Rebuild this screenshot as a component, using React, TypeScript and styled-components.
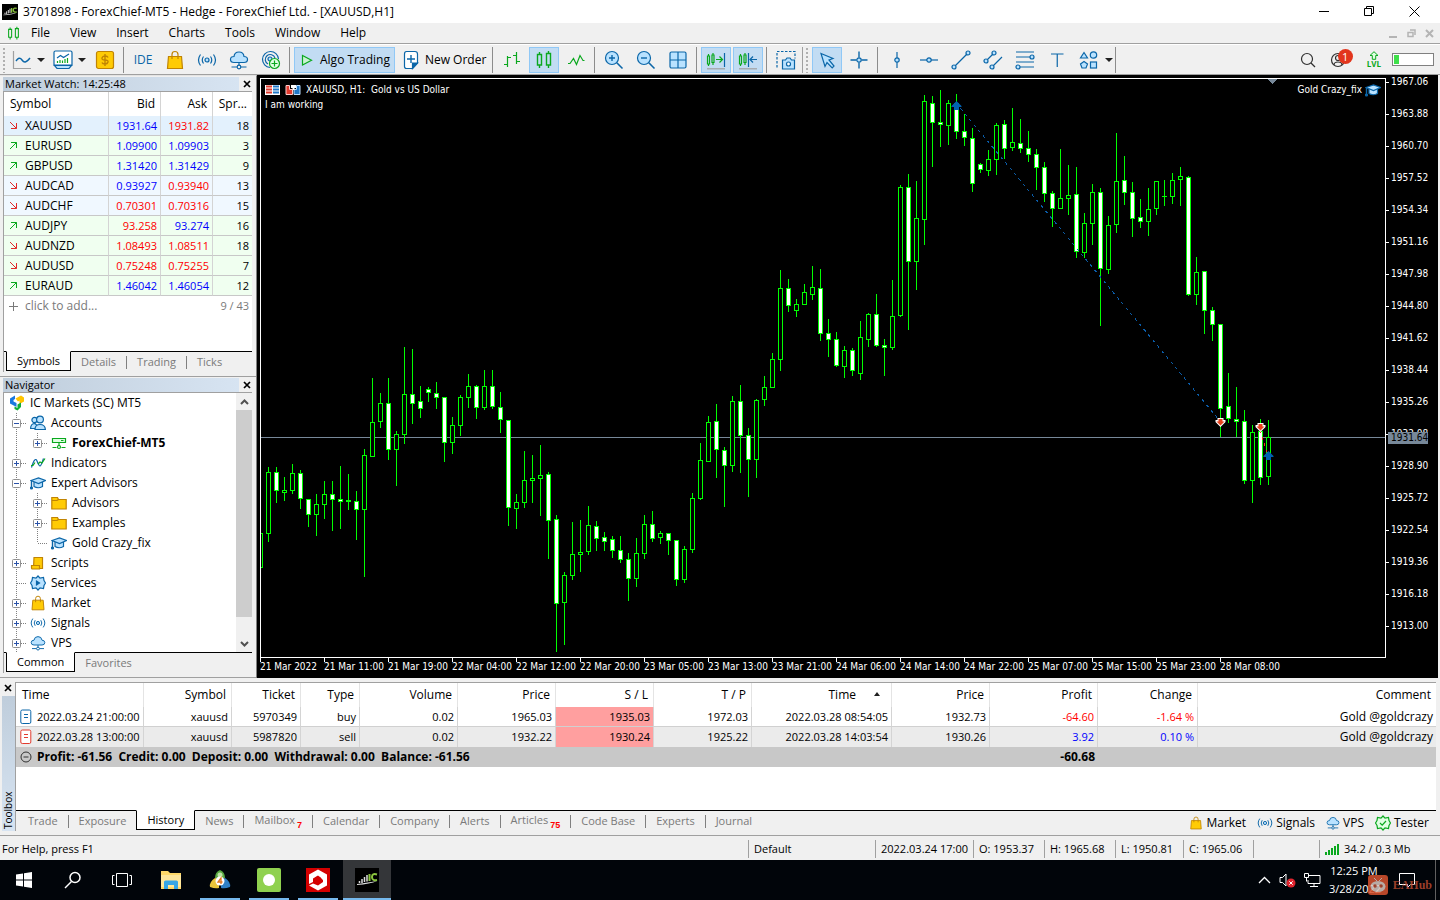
import { Fragment, ReactNode } from 'react';
import styled, { createGlobalStyle, css } from 'styled-components';

const UI_FONT = `'Open Sans', 'Noto Sans', sans-serif`;
const CHART_FONT = `'DejaVu Sans Condensed', 'DejaVu Sans', sans-serif`;

const BLUE = '#0b66a8';
const SKY = '#b9e2ff';
const GREEN = '#0aa81e';
const GOLD = '#ffcb05';
const GOLD_DARK = '#c08404';

const GlobalStyle = createGlobalStyle`
  * { box-sizing: border-box; }
  body {
    margin: 0;
    background: #f0f0f0;
    color: #000;
    font-family: ${UI_FONT};
    font-size: 12px;
    line-height: 16px;
  }
  button {
    margin: 0;
    padding: 0;
    border: 0;
    background: none;
    color: inherit;
    font: inherit;
  }
  a { color: inherit; text-decoration: none; }
  svg { display: block; flex: none; }
`;

/* ---------- icons ---------- */

type IconProps = { size?: number; box?: string; children: ReactNode };

const Svg = ({ size = 20, box = '0 0 20 20', children }: IconProps) => (
  <svg width={size} height={size} viewBox={box} fill="none" stroke={BLUE} strokeWidth="1.2">
    {children}
  </svg>
);

const LineChartIcon = () => (
  <Svg>
    <path d="M1.5 1v17.5H19" stroke="#a0a0a0" />
    <path d="M4 11c2-3 4-4 6-1s4 3 8-2" strokeWidth="1.4" />
  </Svg>
);

const TemplateIcon = () => (
  <Svg>
    <path d="M1 12V2.5Q1 1 2.500 1h15Q19 1 19 2.500V15H1z" fill="#fff" />
    <path d="M1.500 15.500h17L16 18.500H4z" fill={SKY} />
    <path d="M4 8l3.500-2.500 3 2L16 4" />
    <path d="M4.500 13v-2M7 13v-3M9.500 13v-2.500M12 13v-4M14.500 13V8" stroke={GREEN} />
  </Svg>
);

const DollarIcon = () => (
  <Svg>
    <rect x="1.500" y="1.500" width="17" height="17" rx="2" fill={GOLD} stroke={GOLD_DARK} />
    <path
      d="M13 7.500Q12.500 6 10 6T7 8t3 2 3 2-3 2-3-1.500M10 4v12"
      stroke={GOLD_DARK}
      strokeWidth="1.400"
    />
  </Svg>
);

const BagIcon = ({ size = 20 }: { size?: number }) => (
  <Svg size={size}>
    <path d="M3.500 6.500h13l1 12h-15z" fill={GOLD} stroke={GOLD_DARK} />
    <path d="M7 9V4.500Q7 1.500 10 1.500t3 3V9" stroke={GOLD_DARK} />
  </Svg>
);

const SignalIcon = ({ size = 20 }: { size?: number }) => (
  <Svg size={size}>
    <circle cx="10" cy="10" r="2" fill={SKY} />
    <path d="M6.500 6.500q-2.500 3.500 0 7M13.500 6.500q2.500 3.500 0 7M3.500 4.500q-4 5.500 0 11M16.500 4.500q4 5.500 0 11" />
  </Svg>
);

const CloudIcon = ({ size = 20 }: { size?: number }) => (
  <Svg size={size}>
    <path
      d="M5 12.500q-3.500 0-3.500-3T5 6.500q.5-4.500 5-4.500t5 4.500q3.500 0 3.500 3t-3.500 3z"
      fill={SKY}
    />
    <path d="M10 12.500v3M2.500 17H8M12 17h5.500" />
    <circle cx="10" cy="17" r="1.800" />
  </Svg>
);

const RadarIcon = () => (
  <Svg>
    <path d="M9 17.500a8 8 0 1 1 8.500-8.500M7 14a5 5 0 1 1 7-6" />
    <circle cx="9" cy="9" r="2" fill={SKY} />
    <circle cx="13.500" cy="13.500" r="5" fill="#dfffe2" stroke={GREEN} />
    <path d="M13.500 10.500v6M10.500 13.500h6" stroke={GREEN} />
  </Svg>
);

const PlayIcon = () => (
  <Svg>
    <path d="M5.500 5.500v9.500l9-4.750z" stroke={GREEN} fill="#c9f3d2" />
  </Svg>
);

const NewOrderIcon = () => (
  <Svg>
    <path
      d="M4.500 1.500h8.500q2.500 0 2.500 2.500v9l-5 5.500h-6Q2.500 18.500 2.500 16.500V4q0-2.500 2-2.500z"
      fill="#fff"
    />
    <path d="M15.500 13l-5 5.500V13z" fill={BLUE} />
    <path d="M9 5v8M5 9h8" strokeWidth="1.400" />
  </Svg>
);

const BarsIcon = () => (
  <Svg>
    <path d="M5.500 6v11M2 14.500h3.500M5.500 7.500H9M14.500 2v12M11 5.500h3.500M14.500 11.500H18" stroke={GREEN} />
  </Svg>
);

const CandlesIcon = ({ size = 20 }: { size?: number }) => (
  <Svg size={size}>
    <path
      d="M5.500 2v2.500M5.500 15v3M14.500 1v2.500M14.500 15v3M3.500 4.500h4V15h-4zM12.500 3.500h4V15h-4z"
      stroke={GREEN}
      strokeWidth="1.400"
    />
  </Svg>
);

const ZigzagIcon = () => (
  <Svg>
    <path d="M2 13.500h2l3.500-5 3 6 3.500-9 3 5h1.500" stroke={GREEN} />
  </Svg>
);

const ZoomIcon = ({ plus }: { plus?: boolean }) => (
  <Svg>
    <circle cx="8" cy="8" r="6.500" fill={SKY} />
    <path d="M12.800 12.800L18.500 18.500" strokeWidth="1.600" />
    <path d={plus ? 'M8 5v6M5 8h6' : 'M5 8h6'} strokeWidth="1.400" />
  </Svg>
);

const TileIcon = () => (
  <Svg>
    <rect x="2" y="2" width="16" height="16" rx="1.500" fill={SKY} />
    <path d="M10 2v16M2 10h16" />
  </Svg>
);

const ScrollIcon = ({ shift }: { shift?: boolean }) => (
  <Svg>
    <path d="M2.500 4v2M2.500 14v2M7 3v2M7 12v3M1.500 6h2v8h-2zM6 5h2v7.500H6z" stroke={GREEN} />
    {shift ? (
      <path d="M10.500 3v14M19 9.500h-6.500M15 6.500l-3 3 3 3" />
    ) : (
      <>
        <path d="M10 9.500h6M13.500 6.500l3 3-3 3" stroke={GREEN} />
        <path d="M18.500 3v14" />
      </>
    )}
    <path d="M1 18.800h18" stroke="#a0a0a0" />
  </Svg>
);

const CameraIcon = () => (
  <Svg>
    <path d="M1 17.500V1.500h18v7" strokeDasharray="2.500 1.500" />
    <path d="M6.500 10h3l1.500-2h3l1.500 2h3v9h-12z" fill={SKY} />
    <circle cx="12.500" cy="14" r="2" fill="#fff" />
  </Svg>
);

const CursorIcon = () => (
  <Svg>
    <path d="M4 3.500l12 5-4 1.500 5 6-1.800 1.800L10 12.500l-2 4z" fill={SKY} />
  </Svg>
);

const CrosshairIcon = () => (
  <Svg>
    <path d="M10 1.500v6M10 12.500v6M1.500 10h6M12.500 10h6" strokeWidth="1.400" />
    <circle cx="10" cy="10" r="2.200" fill={SKY} />
  </Svg>
);

const VLineIcon = () => (
  <Svg>
    <path d="M10 2v16" />
    <circle cx="10" cy="10" r="2.200" fill={SKY} />
  </Svg>
);

const HLineIcon = () => (
  <Svg>
    <path d="M1 10h18" />
    <circle cx="10" cy="10" r="2.200" fill={SKY} />
  </Svg>
);

const TrendIcon = () => (
  <Svg>
    <path d="M3 17L17 3" />
    <circle cx="3" cy="17" r="2" fill={SKY} />
    <circle cx="17" cy="3" r="2" fill={SKY} />
  </Svg>
);

const ChannelIcon = () => (
  <Svg>
    <path d="M3 11L11 3M9 17L19 7" />
    <circle cx="3" cy="11" r="2" fill={SKY} />
    <circle cx="11" cy="3" r="2" fill={SKY} />
    <circle cx="9" cy="17" r="2" fill={SKY} />
  </Svg>
);

const LevelsIcon = () => (
  <Svg>
    <path d="M1 2h18M1 7h14M1 12h18M5 17h14" />
    <circle cx="17" cy="7" r="2" fill={SKY} />
    <circle cx="3" cy="17" r="2" fill={SKY} />
  </Svg>
);

const TextIcon = () => (
  <Svg>
    <path d="M4 4h12.500M10.250 4v13" />
  </Svg>
);

const ShapesIcon = () => (
  <Svg>
    <path d="M5 2.500l3.500 5.500H1.500z" fill={SKY} />
    <circle cx="14.500" cy="5" r="3.200" fill={SKY} />
    <path d="M5 11.500l3.500 2.500-1.500 4H3L1.500 14z" fill={SKY} />
    <rect x="11.500" y="12" width="6" height="6" fill={SKY} />
  </Svg>
);

const SearchIcon = () => (
  <Svg>
    <circle cx="9" cy="9" r="5.500" stroke="#303030" />
    <path d="M13 13l4 4" stroke="#303030" />
  </Svg>
);

const AccountIcon = () => (
  <Svg>
    <circle cx="9" cy="10" r="6.500" stroke="#303030" />
    <circle cx="9" cy="8" r="2.500" stroke="#303030" />
    <path d="M5 15q0-3 4-3t4 3" stroke="#303030" />
  </Svg>
);

const LevelUpIcon = () => (
  <svg width="14" height="9" viewBox="0 0 14 9" fill="#dfffe2" stroke={GREEN}>
    <path d="M7 .7l4 3.800H8.700v3.800H5.300V4.500H3z" />
  </svg>
);

const CapIcon = () => (
  <Svg size={16} box="0 0 16 16">
    <path d="M4 7v4.500q4 2.500 8.500 0V7" fill={SKY} />
    <path d="M1 5.500L8.500 3l7 2.500-7 3z" fill={SKY} />
    <path d="M1.500 6v7" strokeWidth="1.400" />
    <circle cx="1.500" cy="13" r="1" fill={BLUE} />
  </Svg>
);

const AccountsIcon = () => (
  <Svg size={16} box="0 0 16 16">
    <path d="M.6 13.500q0-5 4.500-5l3 3v2z" fill={SKY} />
    <circle cx="4.500" cy="5" r="2.600" fill={SKY} />
    <path d="M5 14.500q0-5 5-5t5.400 5z" fill={SKY} />
    <circle cx="10" cy="4.500" r="3.400" fill={SKY} />
  </Svg>
);

const ServerIcon = () => (
  <Svg size={16} box="0 0 16 16">
    <path d="M1.500 3.500h13v4h-13z" stroke={GREEN} fill="#dfffe2" />
    <path d="M8 7.500V11M1.500 12.500h4M10.500 12.500h4M10 5.500h2.500" stroke={GREEN} />
    <circle cx="8" cy="12" r="1.500" stroke={GREEN} />
  </Svg>
);

const IndicatorsIcon = () => (
  <Svg size={16} box="0 0 16 16">
    <path d="M1.500 12.500Q5 1 7 6t3 5 3.500-7.500" />
    <path d="M1 10.500h2l2-3M8 9l2-2 2 1 3-4.500" stroke={GREEN} />
  </Svg>
);

const FolderIcon = () => (
  <Svg size={16} box="0 0 16 16">
    <path d="M.8 2.500h5.700l1 2h7.700v9.500H.8z" fill={GOLD} stroke={GOLD_DARK} />
    <path d="M1 5.500h5l1.500-1" stroke={GOLD_DARK} />
  </Svg>
);

const ScriptIcon = () => (
  <Svg size={16} box="0 0 16 16">
    <path d="M4 2.500h8.500v11H3.500z" fill={GOLD} stroke={GOLD_DARK} />
    <path d="M1.500 10.500h8v3.500h-7q-1 0-1-1.500z" fill={GOLD} stroke={GOLD_DARK} />
  </Svg>
);

const GEAR = 'M8 1l2 2.200 3.500-.7.500 3L15.500 8 14 10.500l-.5 3L10 12.800 8 15l-2-2.200-3.500.7-.5-3L.5 8 2 5.500l.5-3 3.500.7z';

const ServicesIcon = () => (
  <Svg size={16} box="0 0 16 16">
    <path d={GEAR} fill={SKY} />
    <path d="M6.500 6v4L9.500 8z" fill={BLUE} />
  </Svg>
);

const TesterIcon = () => (
  <Svg size={16} box="0 0 16 16">
    <path d={GEAR} fill="#dfffe2" stroke={GREEN} />
    <path d="M5 8l2.200 2.200L11 6" stroke={GREEN} />
  </Svg>
);

const BrokerIcon = () => (
  <svg width="16" height="16" viewBox="0 0 16 16">
    <path d="M1 3.500L6 .5v3.500L4.500 5v1.500L7.500 8v4L1 8.500z" fill="#1877e0" />
    <path d="M6.500 3.500L12 .5l3 2v4L10.500 9V5.500L9 6.500z" fill="#ffc400" />
    <path d="M5.500 11.500l3 1.500V9.500L12 7.500V12l-3.500 3.500-3-1.500z" fill="#0fae3a" />
  </svg>
);

const ArrowIcon = ({ up }: { up?: boolean }) => (
  <svg width="9" height="9" viewBox="0 0 9 9" fill="none" stroke={up ? GREEN : '#e02b2b'}>
    <path d={up ? 'M1 8l6.500-6.500M2 1.500h5.500V7' : 'M1 1l6.500 6.500M2 7.500h5.500V2'} />
  </svg>
);

const DocIcon = ({ color }: { color: string }) => (
  <svg width="12" height="16" viewBox="0 0 12 16" fill="#fff" stroke={color}>
    <rect x=".8" y="1" width="10" height="13.500" rx="1.500" />
    <path d="M4 5.500h4M4 8.500h4" />
  </svg>
);

const CloseGlyph = () => (
  <svg width="8" height="8" viewBox="0 0 8 8" stroke="#000" strokeWidth="1.700">
    <path d="M1 1l6 6M7 1L1 7" />
  </svg>
);

const LogoIcon = ({ size = 16 }: { size?: number }) => (
  <svg width={size} height={size} viewBox="0 0 24 24">
    <rect width="24" height="24" fill="#000" />
    <path d="M2 16q8-1 20-3-7 3-20 4z" fill="#ddd" />
    <path d="M4.500 15v-2M7 15v-4M9.500 14V9M12 13.500V7" stroke="#ddd" strokeWidth="1.500" />
    <path d="M14.500 6v7M22 6.500q-5-1.500-5 2.500t5 3" fill="none" stroke="#8cc63f" strokeWidth="2" />
  </svg>
);

/* ---------- shell ---------- */

const Page = styled.div`
  display: flex;
  flex-direction: column;
  min-height: 100vh;
`;

const TitleBar = styled.header`
  display: flex;
  align-items: center;
  height: 23px;
  padding: 0 3px 0 2px;
  background: #fff;
  white-space: pre;
`;

const Title = styled.h1`
  flex: 1;
  margin: 0 0 0 5px;
  font-size: 12px;
  font-weight: 400;
`;

const WindowButton = styled.button`
  display: grid;
  place-items: center;
  width: 45px;
  height: 22px;
`;

const MenuBar = styled.nav`
  display: flex;
  align-items: center;
  height: 21px;
  padding-left: 6px;
  border-bottom: 1px solid #a0a0a0;
`;

const MenuItem = styled.button`
  margin-left: 10px;
  padding-right: 10px;
`;

const MdiButtons = styled.div`
  display: flex;
  gap: 9px;
  margin-left: auto;
  padding-right: 6px;
`;

const ToolBar = styled.div`
  display: flex;
  align-items: center;
  height: 31px;
  border-top: 1px solid #fff;
  border-bottom: 1px solid #a0a0a0;
`;

const Grip = styled.span<{ $edge?: boolean }>`
  width: 7px;
  height: 26px;
  background: radial-gradient(#b0b0b0 1px, transparent 1px) 2px 0 / 4px 4px repeat-y;
  ${({ $edge }) =>
    $edge &&
    css`
      width: 9px;
      border-left: 1px solid #a0a0a0;
    `}
`;

const Separator = styled.span`
  width: 6px;
  height: 26px;
  background: linear-gradient(#8c8c8c, #8c8c8c) 2px 0 / 1px 26px no-repeat;
`;

const ToolButton = styled.button<{ $active?: boolean }>`
  display: grid;
  place-items: center;
  width: 30px;
  height: 26px;
  margin: 0 1px;
  color: ${BLUE};
  ${({ $active }) =>
    $active &&
    css`
      border: 1px solid #90c8f6;
      background: #c2dcf3;
    `}
`;

const DropButton = styled.button`
  display: flex;
  align-items: center;
  gap: 5px;
  width: 41px;
  height: 26px;
  padding-left: 5px;
`;

const Caret = styled.span`
  border: 4px solid transparent;
  border-top-color: #202020;
  border-bottom: 0;
`;

const CaretButton = styled.button`
  display: grid;
  place-items: center;
  width: 8px;
`;

const WideButton = styled.button<{ $active?: boolean }>`
  display: flex;
  align-items: center;
  gap: 3px;
  height: 26px;
  padding: 0 4px 0 6px;
  white-space: nowrap;
  ${({ $active }) =>
    $active &&
    css`
      margin: 0 1px;
      padding: 0 4px 0 2px;
      border: 1px solid #90c8f6;
      background: #c2dcf3;
    `}
`;

const ToolBarEnd = styled.div`
  display: flex;
  align-items: center;
  gap: 11px;
  margin-left: auto;
  padding-right: 6px;
`;

const BadgeButton = styled.button`
  position: relative;
  padding-right: 3px;
`;

const Badge = styled.span`
  position: absolute;
  top: -1px;
  right: -1px;
  width: 15px;
  height: 15px;
  border-radius: 50%;
  background: #e2351d;
  color: #fff;
  font-size: 11px;
  line-height: 15px;
  text-align: center;
`;

const LevelButton = styled.button`
  display: flex;
  flex-direction: column;
  align-items: center;
  margin-left: 4px;
  color: ${GREEN};
  font-size: 8px;
  font-weight: 700;
  line-height: 8px;
`;

const Meter = styled.div`
  width: 42px;
  height: 13px;
  padding: 1px;
  border: 1px solid #808080;
  background: #fff;
`;

const MeterFill = styled.div`
  width: 5px;
  height: 9px;
  background: #3fe04a;
`;

const Workspace = styled.main`
  display: flex;
  flex: 1 0 603px;
  min-height: 0;
`;

const SideBar = styled.aside`
  display: grid;
  grid-template-rows: minmax(0, 1fr) minmax(0, 1fr);
  width: 257px;
  border-top: 1px solid #e3e3e3;
  border-right: 1px solid #808080;
`;

const Panel = styled.section`
  display: flex;
  flex-direction: column;
  min-height: 0;
  padding: 1px 4px 4px 3px;
  border-bottom: 1px solid #a0a0a0;
`;

const PanelHead = styled.div`
  display: flex;
  align-items: center;
  justify-content: space-between;
  height: 14px;
  padding-right: 1px;
`;

const PanelTitle = styled.h2`
  width: 236px;
  margin: 0;
  padding-left: 2px;
  background: linear-gradient(90deg, #bfcddb, #d7e4f2);
  font-size: 11px;
  font-weight: 400;
  line-height: 14px;
`;

const PanelBody = styled.div`
  display: flex;
  flex: 1;
  min-height: 0;
  overflow: hidden;
  border: 1px solid #a0a0a0;
  border-width: 1px 0 0 1px;
  background: #fff;
`;

const Tabs = styled.div`
  display: flex;
  flex: none;
  align-items: flex-start;
  height: 21px;
  border-left: 1px solid #a0a0a0;
`;

const Tab = styled.button<{ $active?: boolean; $divider?: boolean }>`
  height: 20px;
  padding: 0 10px;
  border-top: 1px solid #000;
  color: #7a7a7a;
  font-size: 11px;
  white-space: nowrap;
  ${({ $divider }) =>
    $divider &&
    css`
      padding-right: 11px;
      background: linear-gradient(#808080, #808080) right 4px / 1px 13px no-repeat;
    `}
  ${({ $active }) =>
    $active &&
    css`
      border: 1px solid #000;
      border-top-color: #fff;
      background: #fff;
      color: #000;
    `}
`;

const TabLine = styled.span<{ $fill?: boolean }>`
  flex: ${({ $fill }) => ($fill ? 1 : 'none')};
  width: 2px;
  border-top: 1px solid #000;
`;

const TabCount = styled.sub`
  margin-left: 2px;
  color: #f00;
  font-family: 'Liberation Sans', sans-serif;
  font-size: 9px;
  font-weight: 700;
  line-height: 8px;
  vertical-align: -4px;
`;

/* ---------- market watch ---------- */

const WatchTable = styled.table`
  width: 248px;
  height: max-content;
  border-collapse: separate;
  border-spacing: 0;
  table-layout: fixed;

  th, td {
    padding: 0 3px;
    border-right: 1px solid #d4d4d4;
    font-weight: 400;
    text-align: right;
    white-space: nowrap;
  }
  th { height: 24px; padding-right: 5px; }
  td { height: 20px; border-bottom: 1px solid #c8c8c8; font-size: 11px; }
  th:first-child { padding-left: 6px; text-align: left; }
  th:last-child, td:last-child { border-right: 0; }
`;

const WatchRow = styled.tr<{ $tint: string }>`
  background: ${({ $tint }) => $tint};
`;

const SymbolName = styled.span`
  display: flex;
  align-items: center;
  gap: 7px;
  padding-left: 2px;
  font-size: 12px;
`;

const Quote = styled.td<{ $up: boolean }>`
  color: ${({ $up }) => ($up ? '#0000ff' : '#ff0000')};
`;

const AddRow = styled.tr`
  color: #7a7a7a;
  && td { border: 0; }
`;

type Watch = {
  symbol: string;
  bid: string;
  ask: string;
  spread: number;
  up: boolean;
  bidUp: boolean;
  askUp: boolean;
  tint: string;
};

const MINT = '#f0fff0';
const ICE = '#f0f8ff';

const WATCH: Watch[] = [
  { symbol: 'XAUUSD', bid: '1931.64', ask: '1931.82', spread: 18, up: false, bidUp: true, askUp: false, tint: '#e3f1fd' },
  { symbol: 'EURUSD', bid: '1.09900', ask: '1.09903', spread: 3, up: true, bidUp: true, askUp: true, tint: MINT },
  { symbol: 'GBPUSD', bid: '1.31420', ask: '1.31429', spread: 9, up: true, bidUp: true, askUp: true, tint: MINT },
  { symbol: 'AUDCAD', bid: '0.93927', ask: '0.93940', spread: 13, up: false, bidUp: true, askUp: false, tint: ICE },
  { symbol: 'AUDCHF', bid: '0.70301', ask: '0.70316', spread: 15, up: false, bidUp: false, askUp: false, tint: ICE },
  { symbol: 'AUDJPY', bid: '93.258', ask: '93.274', spread: 16, up: true, bidUp: false, askUp: true, tint: MINT },
  { symbol: 'AUDNZD', bid: '1.08493', ask: '1.08511', spread: 18, up: false, bidUp: false, askUp: false, tint: MINT },
  { symbol: 'AUDUSD', bid: '0.75248', ask: '0.75255', spread: 7, up: false, bidUp: false, askUp: false, tint: MINT },
  { symbol: 'EURAUD', bid: '1.46042', ask: '1.46054', spread: 12, up: true, bidUp: true, askUp: true, tint: MINT },
];

const CloseButton = ({ label }: { label: string }) => (
  <button aria-label={label}>
    <CloseGlyph />
  </button>
);

const MarketWatch = () => (
  <Panel>
    <PanelHead>
      <PanelTitle>Market Watch: 14:25:48</PanelTitle>
      <CloseButton label="Close Market Watch" />
    </PanelHead>
    <PanelBody>
      <WatchTable>
        <colgroup>
          <col width="105" />
          <col width="52" />
          <col width="52" />
          <col width="39" />
        </colgroup>
        <thead>
          <tr>
            <th>Symbol</th>
            <th>Bid</th>
            <th>Ask</th>
            <th>Spr...</th>
          </tr>
        </thead>
        <tbody>
          {WATCH.map((row) => (
            <WatchRow key={row.symbol} $tint={row.tint}>
              <td>
                <SymbolName>
                  <ArrowIcon up={row.up} />
                  {row.symbol}
                </SymbolName>
              </td>
              <Quote $up={row.bidUp}>{row.bid}</Quote>
              <Quote $up={row.askUp}>{row.ask}</Quote>
              <td>{row.spread}</td>
            </WatchRow>
          ))}
          <AddRow>
            <td>
              <SymbolName>
                <svg width="9" height="9" viewBox="0 0 9 9" stroke="#7a7a7a">
                  <path d="M4.500 0v9M0 4.500h9" />
                </svg>
                click to add...
              </SymbolName>
            </td>
            <td colSpan={3}>9 / 43</td>
          </AddRow>
        </tbody>
      </WatchTable>
    </PanelBody>
    <Tabs>
      <TabLine />
      <Tab $active>Symbols</Tab>
      <Tab $divider>Details</Tab>
      <Tab $divider>Trading</Tab>
      <Tab>Ticks</Tab>
      <TabLine $fill />
    </Tabs>
  </Panel>
);

/* ---------- navigator ---------- */

type GuideKind = 'line' | 'plus' | 'minus' | 'plusEnd' | 'tee' | 'end';

const Guide = ({ kind }: { kind: GuideKind }) => {
  const boxed = kind === 'plus' || kind === 'minus' || kind === 'plusEnd';
  const short = kind === 'plusEnd' || kind === 'end';
  return (
    <svg width="21" height="20" fill="none">
      <path d={`M10.500 0V${short ? 10 : 20}`} stroke="#808080" strokeDasharray="1 1" />
      {kind !== 'line' && <path d="M11 10.500H21" stroke="#808080" strokeDasharray="1 1" />}
      {boxed && (
        <>
          <rect x="6.500" y="6.500" width="8" height="8" rx="1" fill="#fff" stroke="#919191" />
          <path d={kind === 'minus' ? 'M8 10.500h5' : 'M8 10.500h5M10.500 8v5'} stroke="#2a52a8" />
        </>
      )}
    </svg>
  );
};

const Tree = styled.ul`
  flex: 1;
  margin: 0;
  padding: 0 0 0 2px;
  list-style: none;
`;

const TreeRow = styled.li<{ $bold?: boolean }>`
  display: flex;
  align-items: center;
  height: 20px;
  font-weight: ${({ $bold }) => ($bold ? 700 : 400)};
`;

const TreeLabel = styled.span`
  display: flex;
  align-items: center;
  gap: 5px;
  padding-left: 3px;
`;

const ScrollTrack = styled.div`
  display: flex;
  flex-direction: column;
  width: 16px;
  background: #f0f0f0;
`;

const ScrollArrow = styled.button`
  display: grid;
  place-items: center;
  height: 17px;
`;

const ScrollThumb = styled.div`
  flex: 1;
  margin-bottom: 18px;
  background: #cdcdcd;
`;

type Node = { label: string; icon: ReactNode; guides: GuideKind[]; bold?: boolean };

const NODES: Node[] = [
  { label: 'IC Markets (SC) MT5', icon: <BrokerIcon />, guides: [] },
  { label: 'Accounts', icon: <AccountsIcon />, guides: ['minus'] },
  { label: 'ForexChief-MT5', icon: <ServerIcon />, guides: ['line', 'plusEnd'], bold: true },
  { label: 'Indicators', icon: <IndicatorsIcon />, guides: ['plus'] },
  { label: 'Expert Advisors', icon: <CapIcon />, guides: ['minus'] },
  { label: 'Advisors', icon: <FolderIcon />, guides: ['line', 'plus'] },
  { label: 'Examples', icon: <FolderIcon />, guides: ['line', 'plus'] },
  { label: 'Gold Crazy_fix', icon: <CapIcon />, guides: ['line', 'end'] },
  { label: 'Scripts', icon: <ScriptIcon />, guides: ['plus'] },
  { label: 'Services', icon: <ServicesIcon />, guides: ['tee'] },
  { label: 'Market', icon: <BagIcon size={16} />, guides: ['plus'] },
  { label: 'Signals', icon: <SignalIcon size={16} />, guides: ['plus'] },
  { label: 'VPS', icon: <CloudIcon size={16} />, guides: ['plus'] },
];

const Navigator = () => (
  <Panel>
    <PanelHead>
      <PanelTitle>Navigator</PanelTitle>
      <CloseButton label="Close Navigator" />
    </PanelHead>
    <PanelBody>
      <Tree>
        {NODES.map((node) => (
          <TreeRow key={node.label} $bold={node.bold}>
            {node.guides.map((kind, i) => (
              <Guide key={i} kind={kind} />
            ))}
            <TreeLabel>
              {node.icon}
              {node.label}
            </TreeLabel>
          </TreeRow>
        ))}
      </Tree>
      <ScrollTrack>
        <ScrollArrow aria-label="Scroll up">
          <svg width="9" height="6" fill="none" stroke="#505050" strokeWidth="2">
            <path d="M1 5l3.500-3.500L8 5" />
          </svg>
        </ScrollArrow>
        <ScrollThumb />
        <ScrollArrow aria-label="Scroll down">
          <svg width="9" height="6" fill="none" stroke="#505050" strokeWidth="2">
            <path d="M1 1l3.500 3.500L8 1" />
          </svg>
        </ScrollArrow>
      </ScrollTrack>
    </PanelBody>
    <Tabs>
      <TabLine />
      <Tab $active>Common</Tab>
      <Tab>Favorites</Tab>
      <TabLine $fill />
    </Tabs>
  </Panel>
);

/* ---------- chart ---------- */

const ChartPane = styled.section`
  display: grid;
  grid-template: minmax(0, 1fr) 20px / 1fr 52px;
  flex: 1;
  min-width: 0;
  margin-right: 2px;
  padding: 3px 0 0 3px;
  background: #000;
  color: #fff;
  font-family: ${CHART_FONT};
  font-size: 10px;
  line-height: 12px;
`;

const Plot = styled.div`
  position: relative;
  min-width: 0;
  overflow: hidden;
  border: 1px solid #fff;
`;

const PlotSvg = styled.svg`
  width: 100%;
  height: 100%;
`;

const PlotCaption = styled.div`
  position: absolute;
  top: 5px;
  left: 4px;
  display: grid;
  gap: 3px;
  white-space: pre;
`;

const PlotExpert = styled.div`
  position: absolute;
  top: 3px;
  right: 4px;
  display: flex;
  align-items: center;
  gap: 3px;
`;

const CaptionLine = styled.div`
  display: flex;
  align-items: center;
  gap: 5px;
`;

const PriceAxis = styled.div`
  position: relative;
`;

const PriceTick = styled.div`
  display: flex;
  align-items: center;
  gap: 2px;
  height: 8px;
  margin-bottom: 24px;

  &::before {
    content: '';
    width: 3px;
    height: 1px;
    background: #fff;
  }
`;

const PriceTag = styled.div`
  position: absolute;
  top: 354px;
  left: 2px;
  width: 40px;
  padding-left: 3px;
  background: #778899;
  color: #000;
`;

const TimeAxis = styled.div`
  display: flex;
  overflow: hidden;
`;

const TimeTick = styled.div`
  flex: none;
  width: 64px;
  padding-top: 3px;
  background: linear-gradient(#fff, #fff) 0 0 / 1px 4px no-repeat;
  white-space: nowrap;
`;

const TIMES = [
  '21 Mar 2022', '21 Mar 11:00', '21 Mar 19:00', '22 Mar 04:00', '22 Mar 12:00', '22 Mar 20:00',
  '23 Mar 05:00', '23 Mar 13:00', '23 Mar 21:00', '24 Mar 06:00', '24 Mar 14:00', '24 Mar 22:00',
  '25 Mar 07:00', '25 Mar 15:00', '25 Mar 23:00', '28 Mar 08:00',
];

const PRICES = Array.from({ length: 18 }, (_, i) => (1967.06 - i * 3.18).toFixed(2));

// high, body top, body bottom, low, 1 = bearish
const CANDLES = [
  [533, 533, 568, 568, 0], [467, 472, 534, 542, 0], [467, 472, 491, 503, 1], [477, 490, 493, 501, 0],
  [464, 473, 491, 494, 0], [470, 473, 499, 509, 1], [499, 499, 515, 527, 1], [494, 504, 515, 536, 0],
  [481, 494, 505, 519, 0], [481, 494, 500, 531, 1], [466, 499, 502, 529, 1], [474, 500, 502, 510, 0],
  [491, 501, 510, 540, 1], [449, 455, 510, 577, 0], [378, 422, 457, 457, 0], [393, 403, 422, 428, 0],
  [378, 403, 450, 460, 1], [431, 434, 450, 486, 0], [347, 394, 435, 444, 0], [349, 394, 404, 424, 1],
  [386, 401, 409, 418, 1], [387, 389, 393, 402, 1], [382, 393, 398, 409, 1], [397, 397, 443, 462, 1],
  [417, 425, 443, 454, 0], [395, 397, 426, 436, 0], [374, 386, 398, 408, 0], [385, 386, 408, 419, 1],
  [370, 386, 408, 410, 0], [370, 386, 407, 409, 1], [392, 407, 420, 433, 1], [420, 420, 508, 526, 1],
  [494, 502, 509, 529, 0], [451, 480, 503, 508, 0], [455, 478, 481, 503, 0], [445, 475, 479, 516, 0],
  [472, 474, 521, 559, 1], [515, 519, 604, 652, 1], [572, 575, 603, 645, 0], [522, 554, 576, 580, 0],
  [520, 552, 555, 572, 0], [506, 525, 552, 555, 0], [521, 526, 539, 551, 1], [532, 537, 542, 551, 1],
  [536, 539, 551, 558, 1], [536, 550, 560, 563, 1], [553, 559, 579, 601, 1], [538, 553, 579, 587, 0],
  [515, 524, 554, 559, 0], [511, 524, 539, 542, 1], [531, 533, 538, 544, 0], [533, 533, 541, 555, 1],
  [540, 540, 580, 586, 1], [546, 549, 580, 583, 0], [493, 498, 550, 553, 0], [443, 460, 499, 500, 0],
  [416, 422, 462, 462, 0], [404, 421, 450, 478, 1], [447, 450, 466, 507, 1], [396, 401, 466, 472, 0],
  [385, 401, 436, 473, 1], [428, 435, 460, 497, 1], [399, 400, 460, 478, 0], [376, 387, 400, 406, 0],
  [353, 359, 388, 388, 0], [270, 288, 360, 371, 0], [279, 288, 306, 312, 1], [299, 304, 311, 317, 0],
  [284, 292, 305, 305, 0], [266, 287, 295, 300, 0], [269, 288, 334, 341, 1], [319, 333, 340, 357, 1],
  [332, 339, 366, 367, 1], [346, 350, 367, 378, 0], [348, 350, 371, 376, 1], [321, 337, 374, 380, 0],
  [313, 314, 340, 347, 0], [294, 314, 346, 347, 1], [339, 345, 348, 376, 1], [280, 316, 348, 350, 0],
  [185, 187, 316, 317, 0], [174, 187, 262, 330, 1], [181, 218, 262, 290, 0], [95, 101, 220, 245, 0],
  [96, 103, 123, 167, 1], [90, 122, 125, 147, 1], [100, 103, 126, 145, 0], [94, 103, 132, 139, 1],
  [114, 131, 138, 146, 1], [128, 138, 184, 192, 1], [163, 164, 170, 173, 1], [150, 159, 171, 176, 0],
  [123, 125, 160, 175, 0], [120, 124, 149, 159, 1], [108, 142, 148, 151, 0], [119, 143, 149, 153, 1],
  [131, 148, 155, 162, 1], [149, 154, 168, 190, 1], [162, 167, 194, 202, 1], [191, 193, 209, 227, 1],
  [149, 198, 209, 209, 0], [165, 195, 199, 215, 0], [167, 194, 252, 258, 1], [213, 223, 253, 258, 0],
  [184, 192, 224, 245, 0], [188, 192, 269, 326, 1], [216, 225, 270, 274, 0], [133, 181, 225, 233, 0],
  [156, 180, 193, 205, 1], [182, 192, 219, 237, 1], [199, 217, 222, 228, 1], [188, 209, 222, 236, 0],
  [181, 181, 209, 215, 0], [180, 196, 197, 206, 0], [173, 180, 197, 204, 0], [167, 176, 180, 206, 0],
  [176, 177, 295, 296, 1], [257, 272, 295, 305, 0], [271, 271, 311, 334, 1], [307, 310, 325, 341, 1],
  [324, 324, 409, 437, 1], [373, 406, 419, 423, 1], [387, 419, 422, 437, 1], [410, 421, 481, 484, 1],
  [425, 432, 481, 503, 0], [419, 431, 478, 485, 1], [420, 437, 477, 485, 0],
];

const LIME = '#00ff00';

const Candle = ({ x, data }: { x: number; data: number[] }) => {
  const [high, top, bottom, low, bearish] = data;
  const height = bottom - top;
  return (
    <g>
      <rect x={x} y={high} width="1" height={low - high} fill={LIME} />
      <rect x={x - 2} y={top} width="5" height={height} fill={LIME} />
      {height > 2 && (
        <rect x={x - 1} y={top + 1} width="3" height={height - 2} fill={bearish ? '#fff' : '#000'} />
      )}
    </g>
  );
};

const BuyMark = ({ x, y }: { x: number; y: number }) => (
  <path d={`M${x} ${y - 5}l5 5v1h-2.500v3h-5v-3h-2.500v-1z`} fill="#0060b0" />
);

const SellMark = ({ x, y }: { x: number; y: number }) => (
  <g>
    <path d={`M${x} ${y + 5}l5-5v-2h-2v-2h-6v2h-2v2z`} fill="#fff" />
    <path d={`M${x} ${y + 3.5}l4-4h-2v-2.500h-4v2.500h-2z`} fill="#e8401c" />
  </g>
);

const Chart = () => (
  <ChartPane>
    <Plot>
      <PlotSvg shapeRendering="crispEdges">
        <g transform="translate(-261 -79)">
          <rect x="261" y="437" width="3000" height="1" fill="#778899" />
          {CANDLES.map((data, i) => (
            <Candle key={i} x={260 + i * 8} data={data} />
          ))}
          <path d="M956 103L1220 421" stroke="#0a5ca8" strokeDasharray="3 4" />
          <path d="M1260 430L1268 455" stroke="#e8401c" strokeDasharray="3 4" />
          <path d="M1267 79h11l-5.500 5z" fill="#778899" />
          <g shapeRendering="auto">
            <BuyMark x={956.5} y={106} />
            <BuyMark x={1268.5} y={456} />
            <SellMark x={1220.5} y={422} />
            <SellMark x={1260.5} y={427} />
          </g>
        </g>
      </PlotSvg>
      <PlotCaption>
        <CaptionLine>
          <svg width="15" height="12">
            <path d="M0 1h8v10H0z" fill="#fff" />
            <path d="M7 1h8v10H7z" fill="#fff" />
            <path d="M1 2.500h6M1 5.500h6M1 8.500h6" stroke="#e23b2e" strokeWidth="2" />
            <path d="M8 2.500h6M8 5.500h6M8 8.500h6" stroke="#1f78c8" strokeWidth="2" />
          </svg>
          <svg width="16" height="12">
            <path d="M1 1.500h3.500v4h3v5H1z" fill="#e23b2e" stroke="#fcc" />
            <path d="M9 5.500h2.500v-4H15v9H9z" fill="#1f78c8" stroke="#bdf" />
            <path d="M6 1h5v3H9.500v2h-2V4H6z" fill="#fff" />
          </svg>
          <span>{'XAUUSD, H1:  Gold vs US Dollar'}</span>
        </CaptionLine>
        <span>I am working</span>
      </PlotCaption>
      <PlotExpert>
        Gold Crazy_fix
        <CapIcon />
      </PlotExpert>
    </Plot>
    <PriceAxis>
      {PRICES.map((price) => (
        <PriceTick key={price}>{price}</PriceTick>
      ))}
      <PriceTag>1931.64</PriceTag>
    </PriceAxis>
    <TimeAxis>
      {TIMES.map((time) => (
        <TimeTick key={time}>{time}</TimeTick>
      ))}
    </TimeAxis>
  </ChartPane>
);

/* ---------- toolbox ---------- */

const ToolboxPane = styled.section`
  display: flex;
  height: 158px;
  padding: 4px 4px 4px 1px;
  border-bottom: 1px solid #a0a0a0;
`;

const ToolboxRail = styled.div`
  display: flex;
  flex-direction: column;
  align-items: center;
  width: 14px;
  gap: 4px;
  padding-top: 2px;
`;

const ToolboxTitle = styled.h2`
  flex: 1;
  width: 13px;
  margin: 0;
  padding-top: 2px;
  background: linear-gradient(0deg, #bfcddb, #d7e4f2);
  font-size: 10px;
  font-weight: 400;
  line-height: 13px;
  writing-mode: vertical-rl;
  transform: rotate(180deg);
`;

const ToolboxBody = styled.div`
  display: flex;
  flex: 1;
  flex-direction: column;
  min-width: 0;
`;

const TableFrame = styled.div`
  flex: 1;
  overflow: hidden;
  border: 1px solid #a0a0a0;
  border-width: 1px 0 0 1px;
  background: #fff;
`;

const HistoryTable = styled.table`
  width: 100%;
  border-collapse: separate;
  border-spacing: 0;
  table-layout: fixed;

  th, td {
    height: 20px;
    padding: 0 3px;
    border-right: 1px solid #d4d4d4;
    font-weight: 400;
    text-align: right;
    white-space: pre;
  }
  td { font-size: 11px; }
  td:last-child { font-size: 12px; }
  thead th { height: 24px; padding-right: 5px; border-right-color: #e4e4e4; }
  thead th:first-child { padding-left: 6px; text-align: left; }
  th:last-child, td:last-child { border-right: 0; }
  tbody tr:first-child td { border-bottom: 1px solid #d0d0d0; }
`;

const DealRow = styled.tr<{ $shade?: boolean }>`
  background: ${({ $shade }) => ($shade ? '#ebebeb' : '#fff')};
`;

const DealTime = styled.span`
  display: flex;
  align-items: center;
  gap: 5px;
  padding-left: 1px;
`;

const StopCell = styled.td`
  background: #ff9f9f;
`;

const Money = styled.td<{ $loss?: boolean }>`
  color: ${({ $loss }) => ($loss ? '#ff0000' : '#0000ff')};
`;

const SummaryRow = styled.tr`
  background: #c8c8c8;
  && td { border: 0; font-size: 12px; font-weight: 700; }
  && td:first-child { text-align: left; }
`;

const SortArrow = styled.span`
  display: inline-block;
  margin: 0 6px 3px 18px;
  border: 3px solid transparent;
  border-top: 0;
  border-bottom: 4px solid #202020;
`;

const ShortcutBar = styled.div`
  display: flex;
  flex: 1;
  align-items: center;
  justify-content: flex-end;
  gap: 11px;
  height: 24px;
  padding-right: 7px;
  border-top: 1px solid #000;
`;

const Shortcut = styled.a`
  display: flex;
  align-items: center;
  gap: 3px;
`;

const COLUMNS = [128, 88, 69, 59, 98, 98, 98, 98, 140, 98, 108, 100];

const DEALS = [
  {
    opened: '2022.03.24 21:00:00',
    ticket: '5970349',
    type: 'buy',
    price: '1965.03',
    sl: '1935.03',
    tp: '1972.03',
    closed: '2022.03.28 08:54:05',
    closePrice: '1932.73',
    profit: '-64.60',
    change: '-1.64 %',
  },
  {
    opened: '2022.03.28 13:00:00',
    ticket: '5987820',
    type: 'sell',
    price: '1932.22',
    sl: '1930.24',
    tp: '1925.22',
    closed: '2022.03.28 14:03:54',
    closePrice: '1930.26',
    profit: '3.92',
    change: '0.10 %',
  },
];

const TOOLBOX_TABS: { name: string; count?: number }[] = [
  { name: 'Trade' },
  { name: 'Exposure' },
  { name: 'History' },
  { name: 'News' },
  { name: 'Mailbox', count: 7 },
  { name: 'Calendar' },
  { name: 'Company' },
  { name: 'Alerts' },
  { name: 'Articles', count: 75 },
  { name: 'Code Base' },
  { name: 'Experts' },
  { name: 'Journal' },
];

const Toolbox = () => (
  <ToolboxPane>
    <ToolboxRail>
      <CloseButton label="Close Toolbox" />
      <ToolboxTitle>Toolbox</ToolboxTitle>
    </ToolboxRail>
    <ToolboxBody>
      <TableFrame>
        <HistoryTable>
          <colgroup>
            {COLUMNS.map((width, i) => (
              <col key={i} width={width} />
            ))}
            <col />
          </colgroup>
          <thead>
            <tr>
              <th>Time</th>
              <th>Symbol</th>
              <th>Ticket</th>
              <th>Type</th>
              <th>Volume</th>
              <th>Price</th>
              <th>S / L</th>
              <th>T / P</th>
              <th>
                Time
                <SortArrow />
              </th>
              <th>Price</th>
              <th>Profit</th>
              <th>Change</th>
              <th>Comment</th>
            </tr>
          </thead>
          <tbody>
            {DEALS.map((deal) => {
              const sell = deal.type === 'sell';
              return (
                <DealRow key={deal.ticket} $shade={sell}>
                  <td>
                    <DealTime>
                      <DocIcon color={sell ? '#e23b2e' : BLUE} />
                      {deal.opened}
                    </DealTime>
                  </td>
                  <td>xauusd</td>
                  <td>{deal.ticket}</td>
                  <td>{deal.type}</td>
                  <td>0.02</td>
                  <td>{deal.price}</td>
                  <StopCell>{deal.sl}</StopCell>
                  <td>{deal.tp}</td>
                  <td>{deal.closed}</td>
                  <td>{deal.closePrice}</td>
                  <Money $loss={!sell}>{deal.profit}</Money>
                  <Money $loss={!sell}>{deal.change}</Money>
                  <td>Gold @goldcrazy</td>
                </DealRow>
              );
            })}
            <SummaryRow>
              <td colSpan={10}>
                <DealTime>
                  <svg width="12" height="12" fill="none" stroke="#303030">
                    <circle cx="6" cy="6" r="5" />
                    <path d="M3.500 6h5" />
                  </svg>
                  {'Profit: -61.56  Credit: 0.00  Deposit: 0.00  Withdrawal: 0.00  Balance: -61.56'}
                </DealTime>
              </td>
              <td>-60.68</td>
              <td colSpan={2} />
            </SummaryRow>
          </tbody>
        </HistoryTable>
      </TableFrame>
      <Tabs>
        <TabLine />
        {TOOLBOX_TABS.map(({ name, count }, i) => (
          <Tab
            key={name}
            $active={name === 'History'}
            $divider={!['Exposure', 'History'].includes(name) && i < TOOLBOX_TABS.length - 1}
          >
            {name}
            {count && <TabCount>{count}</TabCount>}
          </Tab>
        ))}
        <ShortcutBar>
          <Shortcut href="#market">
            <BagIcon size={14} />
            Market
          </Shortcut>
          <Shortcut href="#signals">
            <SignalIcon size={16} />
            Signals
          </Shortcut>
          <Shortcut href="#vps">
            <CloudIcon size={14} />
            VPS
          </Shortcut>
          <Shortcut href="#tester">
            <TesterIcon />
            Tester
          </Shortcut>
        </ShortcutBar>
      </Tabs>
    </ToolboxBody>
  </ToolboxPane>
);

/* ---------- status bar and taskbar ---------- */

const StatusBar = styled.footer`
  display: flex;
  align-items: center;
  height: 24px;
  padding: 2px 0 0 2px;
  font-size: 11px;
`;

const StatusText = styled.span`
  flex: 1;
`;

const StatusCell = styled.span<{ $width: number }>`
  display: flex;
  align-items: center;
  gap: 5px;
  width: ${({ $width }) => $width}px;
  height: 18px;
  padding-left: 5px;
  border-left: 1px solid #a0a0a0;
  white-space: nowrap;
`;

const TaskBar = styled.div`
  display: flex;
  align-items: center;
  height: 40px;
  background: #01050a;
  color: #fff;
`;

const Task = styled.button<{ $running?: boolean; $active?: boolean }>`
  display: grid;
  place-items: center;
  width: 48px;
  height: 40px;
  margin-right: 1px;
  background: ${({ $active }) => ($active ? '#343639' : 'none')};
  box-shadow: ${({ $active }) => ($active ? 'inset 0 -2px #76b9ed' : 'none')};
  ${({ $running }) =>
    $running &&
    css`
      background: linear-gradient(#76b9ed, #76b9ed) center bottom / 40px 2px no-repeat;
    `}
`;

const Tray = styled.div`
  position: relative;
  display: flex;
  align-items: center;
  gap: 8px;
  height: 40px;
  margin-left: auto;
  margin-right: 4px;
  padding-right: 20px;
  border-right: 1px solid #606060;
`;

const Clock = styled.div`
  width: 50px;
  margin-right: 12px;
  font-size: 11px;
  line-height: 18px;
  text-align: center;
  white-space: nowrap;
`;

const Watermark = styled.div`
  position: absolute;
  right: 3px;
  bottom: 5px;
  display: flex;
  align-items: center;
  gap: 5px;
  color: #b5482f;
  font-family: 'Liberation Serif', serif;
  font-size: 12px;
  font-weight: 700;
  opacity: 0.85;
`;

const STATUS = ['O: 1953.37', 'H: 1965.68', 'L: 1950.81', 'C: 1965.06'];
const STATUS_WIDTHS = [71, 71, 68, 70];

const Status = () => (
  <StatusBar>
    <StatusText>For Help, press F1</StatusText>
    <StatusCell $width={127}>Default</StatusCell>
    <StatusCell $width={98}>2022.03.24 17:00</StatusCell>
    {STATUS.map((text, i) => (
      <StatusCell key={text} $width={STATUS_WIDTHS[i]}>
        {text}
      </StatusCell>
    ))}
    <StatusCell $width={66} />
    <StatusCell $width={121}>
      <svg width="14" height="11" fill={GREEN}>
        <path d="M0 8h2v3H0zM3 6h2v5H3zM6 4h2v7H6zM9 2h2v9H9zM12 0h2v11h-2z" />
      </svg>
      34.2 / 0.3 Mb
    </StatusCell>
  </StatusBar>
);

const Windows = () => (
  <TaskBar>
    <Task aria-label="Start">
      <svg width="16" height="16" fill="#fff">
        <path d="M0 2.500L7 1.500v6H0zM8 1.300L16 0v7.500H8zM0 8.500h7v6l-7-1zM8 8.500h8V16l-8-1.300z" />
      </svg>
    </Task>
    <Task aria-label="Search">
      <svg width="18" height="18" fill="none" stroke="#fff" strokeWidth="1.500">
        <circle cx="11" cy="6.500" r="5" />
        <path d="M7.500 10.500L1 17" />
      </svg>
    </Task>
    <Task aria-label="Task view">
      <svg width="20" height="16" fill="none" stroke="#fff">
        <path d="M4.500 1.500h11v13h-11zM2.500 3.500h-2v9h2M17.500 3.500h2v9h-2" />
      </svg>
    </Task>
    <Task aria-label="File Explorer">
      <svg width="22" height="20">
        <path d="M1 1h7l2 2h11v16H1z" fill="#ffd969" />
        <path d="M1 5h20v12H1z" fill="#ffe79b" />
        <path d="M4 19v-7q0-1.500 1.500-1.500h11q1.500 0 1.500 1.500v7h-4v-4H8v4z" fill="#35a5e5" />
      </svg>
    </Task>
    <Task aria-label="MetaTrader 4" $running>
      <svg width="22" height="22">
        <path d="M11 1q5 2 5 8H6q0-6 5-8z" fill="#58a840" />
        <circle cx="11" cy="6" r="2.500" fill="#bfe3a8" />
        <path d="M6 9q-6 4-5 9 5 2 9 1V10z" fill="#e9c43a" />
        <path d="M16 9q6 4 5 9-5 2-9 1V10z" fill="#2f7fc4" />
        <circle cx="11" cy="12" r="4.500" fill="#fff" />
        <path d="M12 15v-6l-3 4h4.500" fill="none" stroke="#e2761c" strokeWidth="1.300" />
      </svg>
    </Task>
    <Task aria-label="Recorder" $running>
      <svg width="24" height="24">
        <rect width="24" height="24" rx="2" fill="#8fd14f" />
        <circle cx="12" cy="12" r="6" fill="#fff" />
      </svg>
    </Task>
    <Task aria-label="ForexChief" $running>
      <svg width="24" height="24">
        <rect width="24" height="24" fill="#d40000" />
        <path d="M12 1.500l9 5v4l-4 1.500-5-4.500-5 3v3.500l-4 2V6.500zM3 17.500l4-2 5 2 5-3.500v-2l4-1.500v7l-9 5z" fill="#fff" />
        <circle cx="12" cy="12" r="3.500" fill="#d40000" />
      </svg>
    </Task>
    <Task aria-label="IC Markets terminal" $active>
      <LogoIcon size={24} />
    </Task>
    <Tray>
      <svg width="13" height="8" fill="none" stroke="#fff" strokeWidth="1.300">
        <path d="M1 7l5.500-5.500L12 7" />
      </svg>
      <svg width="17" height="16" fill="none" stroke="#fff">
        <path d="M1 5.500h2.500L7 2v12l-3.500-3.500H1z" />
        <circle cx="12" cy="11" r="4.500" fill="#e0242e" stroke="none" />
        <path d="M10.300 9.300l3.400 3.400M13.700 9.300l-3.400 3.400" />
      </svg>
      <svg width="17" height="16" fill="none" stroke="#fff">
        <path d="M5 3.500h11v8H4V8M10 11.500v3M6 14.500h8M.5 1.500h4v4h-4zM2.500 5.500v4" />
      </svg>
      <Clock>
        12:25 PM
        <br />
        3/28/2022
      </Clock>
      <svg width="16" height="17" fill="none" stroke="#fff">
        <path d="M.5 1.500h15v11h-4l-3 3v-3h-8z" />
      </svg>
      <Watermark>
        <svg width="20" height="20">
          <rect width="20" height="20" rx="3" fill="#d9532f" />
          <path d="M6 3l3 3M14 3l-3 3" stroke="#d8c8c0" />
          <ellipse cx="10" cy="11.500" rx="7.500" ry="5.500" fill="#d8c8c0" />
          <circle cx="7" cy="11" r="1.800" fill="#b5482f" />
          <circle cx="13" cy="11" r="1.800" fill="#b5482f" />
        </svg>
        EAHub
      </Watermark>
    </Tray>
  </TaskBar>
);

/* ---------- top bars ---------- */

const MENU = ['File', 'View', 'Insert', 'Charts', 'Tools', 'Window', 'Help'];

type Tool = { label: string; icon: ReactNode; active?: boolean };

const TOOL_GROUPS: Tool[][] = [
  [
    { label: 'Bar chart', icon: <BarsIcon /> },
    { label: 'Candlesticks', icon: <CandlesIcon />, active: true },
    { label: 'Line chart', icon: <ZigzagIcon /> },
  ],
  [
    { label: 'Zoom in', icon: <ZoomIcon plus /> },
    { label: 'Zoom out', icon: <ZoomIcon /> },
    { label: 'Tile windows', icon: <TileIcon /> },
  ],
  [
    { label: 'Auto scroll', icon: <ScrollIcon />, active: true },
    { label: 'Chart shift', icon: <ScrollIcon shift />, active: true },
  ],
];

const SERVICE_TOOLS: Tool[] = [
  { label: 'MetaEditor', icon: 'IDE' },
  { label: 'Market', icon: <BagIcon /> },
  { label: 'Signals', icon: <SignalIcon /> },
  { label: 'VPS', icon: <CloudIcon /> },
  { label: 'Copy signals', icon: <RadarIcon /> },
];

const DRAW_TOOLS: Tool[] = [
  { label: 'Vertical line', icon: <VLineIcon /> },
  { label: 'Horizontal line', icon: <HLineIcon /> },
  { label: 'Trendline', icon: <TrendIcon /> },
  { label: 'Channel', icon: <ChannelIcon /> },
  { label: 'Fibonacci', icon: <LevelsIcon /> },
  { label: 'Text', icon: <TextIcon /> },
  { label: 'Shapes', icon: <ShapesIcon /> },
];

const renderTools = (tools: Tool[]) =>
  tools.map(({ label, icon, active }) => (
    <ToolButton key={label} aria-label={label} $active={active}>
      {icon}
    </ToolButton>
  ));

const TopBars = () => (
  <>
    <TitleBar>
      <LogoIcon />
      <Title>3701898 - ForexChief-MT5 - Hedge - ForexChief Ltd. - [XAUUSD,H1]</Title>
      <WindowButton aria-label="Minimize">
        <svg width="11" height="11" stroke="#000">
          <path d="M0 5.500h10" />
        </svg>
      </WindowButton>
      <WindowButton aria-label="Restore">
        <svg width="11" height="11" fill="none" stroke="#000">
          <path d="M.5 2.500h7v7h-7zM2.500 2.500v-2h7v7h-2" />
        </svg>
      </WindowButton>
      <WindowButton aria-label="Close">
        <svg width="11" height="11" stroke="#000">
          <path d="M.5 .5l10 10M10.500 .5l-10 10" />
        </svg>
      </WindowButton>
    </TitleBar>
    <MenuBar>
      <CandlesIcon size={15} />
      {MENU.map((item) => (
        <MenuItem key={item}>{item}</MenuItem>
      ))}
      <MdiButtons>
        <button aria-label="Minimize chart">
          <svg width="9" height="9" stroke="#b4b4b4" strokeWidth="2">
            <path d="M0 8h8" />
          </svg>
        </button>
        <button aria-label="Restore chart">
          <svg width="9" height="9" fill="none" stroke="#b4b4b4">
            <path d="M1 3.500h5v4H1zM3 1h5v5" strokeWidth="1.500" />
          </svg>
        </button>
        <button aria-label="Close chart">
          <svg width="9" height="9" stroke="#b4b4b4" strokeWidth="2">
            <path d="M1 1l7 7M8 1L1 8" />
          </svg>
        </button>
      </MdiButtons>
    </MenuBar>
    <ToolBar>
      <Grip />
      <DropButton aria-label="Charts">
        <LineChartIcon />
        <Caret />
      </DropButton>
      <DropButton aria-label="Templates">
        <TemplateIcon />
        <Caret />
      </DropButton>
      <ToolButton aria-label="Symbols">
        <DollarIcon />
      </ToolButton>
      <Separator />
      {renderTools(SERVICE_TOOLS)}
      <Separator />
      <WideButton $active>
        <PlayIcon />
        Algo Trading
      </WideButton>
      <WideButton>
        <NewOrderIcon />
        New Order
      </WideButton>
      <Separator />
      {TOOL_GROUPS.map((group, i) => (
        <Fragment key={i}>
          {renderTools(group)}
          <Separator />
        </Fragment>
      ))}
      <ToolButton aria-label="Screenshot">
        <CameraIcon />
      </ToolButton>
      <Grip $edge />
      <ToolButton aria-label="Cursor" $active>
        <CursorIcon />
      </ToolButton>
      <ToolButton aria-label="Crosshair">
        <CrosshairIcon />
      </ToolButton>
      <Separator />
      {renderTools(DRAW_TOOLS)}
      <CaretButton aria-label="More shapes">
        <Caret />
      </CaretButton>
      <Separator />
      <ToolBarEnd>
        <button aria-label="Search">
          <SearchIcon />
        </button>
        <BadgeButton aria-label="Account">
          <AccountIcon />
          <Badge>1</Badge>
        </BadgeButton>
        <LevelButton>
          <LevelUpIcon />
          LVL
        </LevelButton>
        <Meter>
          <MeterFill />
        </Meter>
      </ToolBarEnd>
    </ToolBar>
  </>
);

export default function App() {
  return (
    <Page>
      <GlobalStyle />
      <TopBars />
      <Workspace>
        <SideBar>
          <MarketWatch />
          <Navigator />
        </SideBar>
        <Chart />
      </Workspace>
      <Toolbox />
      <Status />
      <Windows />
    </Page>
  );
}
